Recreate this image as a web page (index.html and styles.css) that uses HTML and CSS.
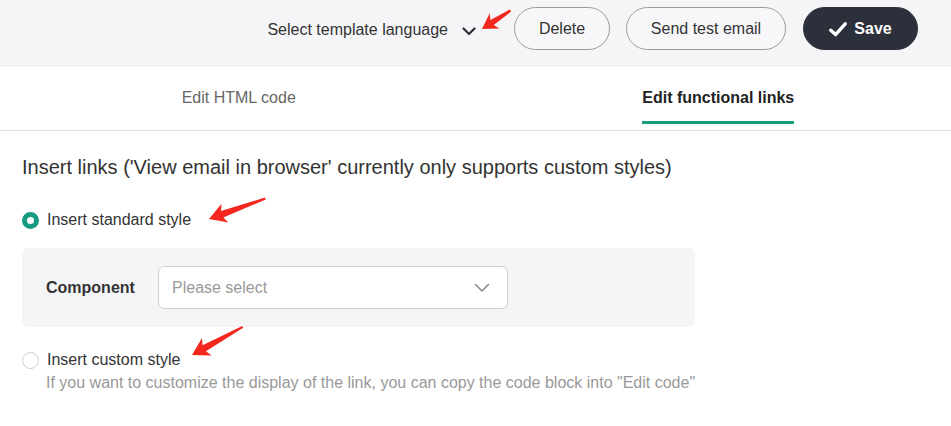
FILE: index.html
```html
<!DOCTYPE html>
<html lang="en">
<head>
<meta charset="utf-8">
<title>Edit functional links</title>
<link rel="stylesheet" href="styles.css">
</head>
<body>
<div class="page">
  <header class="topbar">
    <div class="lang-select">
      <span class="lang-text">Select template language</span>
      <svg class="lang-chevron" width="14" height="9" viewBox="0 0 14 9"><path d="M1.5 1.5 L7 7 L12.5 1.5" fill="none" stroke="#2b2f36" stroke-width="2.2" stroke-linecap="round" stroke-linejoin="round"/></svg>
    </div>
    <button class="btn btn-outline btn-delete">Delete</button>
    <button class="btn btn-outline btn-send">Send test email</button>
    <button class="btn btn-primary">
      <svg class="check" width="18" height="15" viewBox="0 0 18 15"><path d="M1.8 8.2 L6.6 12.6 L16.2 1.8" fill="none" stroke="#fff" stroke-width="3.4" stroke-linecap="round" stroke-linejoin="round"/></svg>
      <span>Save</span>
    </button>
  </header>

  <nav class="tabs">
    <div class="tab tab-first"><span class="tab-label">Edit HTML code</span></div>
    <div class="tab tab-active"><span class="tab-label">Edit functional links</span></div>
  </nav>

  <main class="content">
    <h2 class="title">Insert links ('View email in browser' currently only supports custom styles)</h2>

    <label class="radio-row row-standard">
      <span class="radio radio-checked"></span>
      <span class="radio-label">Insert standard style</span>
    </label>

    <div class="panel">
      <span class="field-label">Component</span>
      <div class="select">
        <span class="placeholder">Please select</span>
        <svg class="select-chevron" width="16" height="10" viewBox="0 0 16 10"><path d="M1.5 1.5 L8 8 L14.5 1.5" fill="none" stroke="#8a8a8a" stroke-width="1.6" stroke-linecap="round" stroke-linejoin="round"/></svg>
      </div>
    </div>

    <label class="radio-row row-custom">
      <span class="radio"></span>
      <span class="radio-label">Insert custom style</span>
    </label>
    <p class="hint">If you want to customize the display of the link, you can copy the code block into "Edit code"</p>
  </main>

  <svg class="annotations" width="951" height="426" viewBox="0 0 951 426">
    <g fill="#f4271f">
      <polygon transform="translate(482 29) rotate(-33)" points="0,0 15,-9 12,-3 34,-1.2 34,1.2 12,3 15,9"/>
      <polygon transform="translate(209 219) rotate(-20)" points="0,0 17,-10 14,-3.5 60,-1 60,1 14,3.5 17,10"/>
      <polygon transform="translate(192 355) rotate(-29)" points="0,0 17,-10 14,-3.5 58,-1 58,1 14,3.5 17,10"/>
    </g>
  </svg>
</div>
</body>
</html>
```
FILE: styles.css
```css
* { box-sizing: border-box; }
html, body { margin: 0; padding: 0; background: #fff; }
body {
  font-family: "Liberation Sans", Arial, sans-serif;
  color: #333;
  width: 951px;
  height: 426px;
  overflow: hidden;
}
.page { position: relative; width: 951px; height: 426px; }

.topbar {
  height: 66px;
  background: #f5f5f7;
  border-bottom: 1px solid #ebebee;
  display: flex;
  align-items: center;
  justify-content: flex-end;
  padding: 0 33px 8px 0;
}
.lang-select {
  display: flex;
  align-items: center;
  margin-right: 38px;
  font-size: 16px;
  color: #333;
}
.lang-text { line-height: 20px; margin-top: 2px; }
.lang-chevron { margin-left: 14px; margin-top: 5px; }

.btn {
  height: 43px;
  border-radius: 22px;
  font-family: "Liberation Sans", Arial, sans-serif;
  font-size: 16px;
  padding: 0 20px;
  display: flex;
  align-items: center;
  cursor: pointer;
  white-space: nowrap;
}
.btn-outline {
  background: #f7f7f9;
  border: 1px solid #9c9c9c;
  color: #333;
}
.btn-delete { width: 96px; justify-content: center; margin-right: 16px; }
.btn-send { width: 160px; justify-content: center; margin-right: 17px; }
.btn-primary {
  width: 115px;
  justify-content: center;
  background: #2b303b;
  border: 1px solid #2b303b;
  color: #fff;
  font-weight: bold;
  gap: 7px;
  padding: 0 20px;
}
.check { margin-top: 1px; }

.tabs {
  display: flex;
  border-bottom: 1px solid #dedede;
  height: 65px;
}
.tab {
  flex: 1;
  display: flex;
  justify-content: center;
  padding-top: 23px;
}
.tab-first { padding-left: 6px; }
.tab-active { padding-left: 14px; }
.tab-label {
  font-size: 16px;
  line-height: 18px;
  color: #666;
  padding-bottom: 14px;
  border-bottom: 3px solid transparent;
  height: 35px;
}
.tab-active .tab-label {
  color: #222;
  font-weight: bold;
  border-bottom-color: #169a80;
}

.content { padding: 0 0 0 22px; }
.title {
  margin: 24px 0 0 0;
  font-size: 20px;
  font-weight: normal;
  line-height: 24px;
  color: #333;
  white-space: nowrap;
}
.radio-row {
  display: flex;
  align-items: center;
  height: 24px;
  gap: 8px;
  font-size: 16px;
  color: #333;
}
.row-standard { margin-top: 29px; }
.row-custom { margin-top: 21px; }
.radio {
  width: 17px;
  height: 17px;
  border-radius: 50%;
  border: 1px solid #cfcfcf;
  background: #fff;
  flex: none;
}
.radio-checked {
  border: 5.5px solid #169a80;
}
.panel {
  margin-top: 16px;
  width: 673px;
  height: 79px;
  background: #f5f5f7;
  border-radius: 6px;
  display: flex;
  align-items: center;
  padding-left: 24px;
}
.field-label {
  font-size: 16px;
  font-weight: bold;
  color: #333;
  width: 112px;
}
.select {
  width: 350px;
  height: 43px;
  background: #fff;
  border: 1px solid #cfcfcf;
  border-radius: 6px;
  display: flex;
  align-items: center;
  justify-content: space-between;
  padding: 0 17px 0 13px;
}
.placeholder { font-size: 16px; color: #999; }
.hint {
  margin: 0 0 0 24px;
  font-size: 16px;
  line-height: 22px;
  color: #999;
}
.annotations {
  position: absolute;
  left: 0;
  top: 0;
  pointer-events: none;
}
```
